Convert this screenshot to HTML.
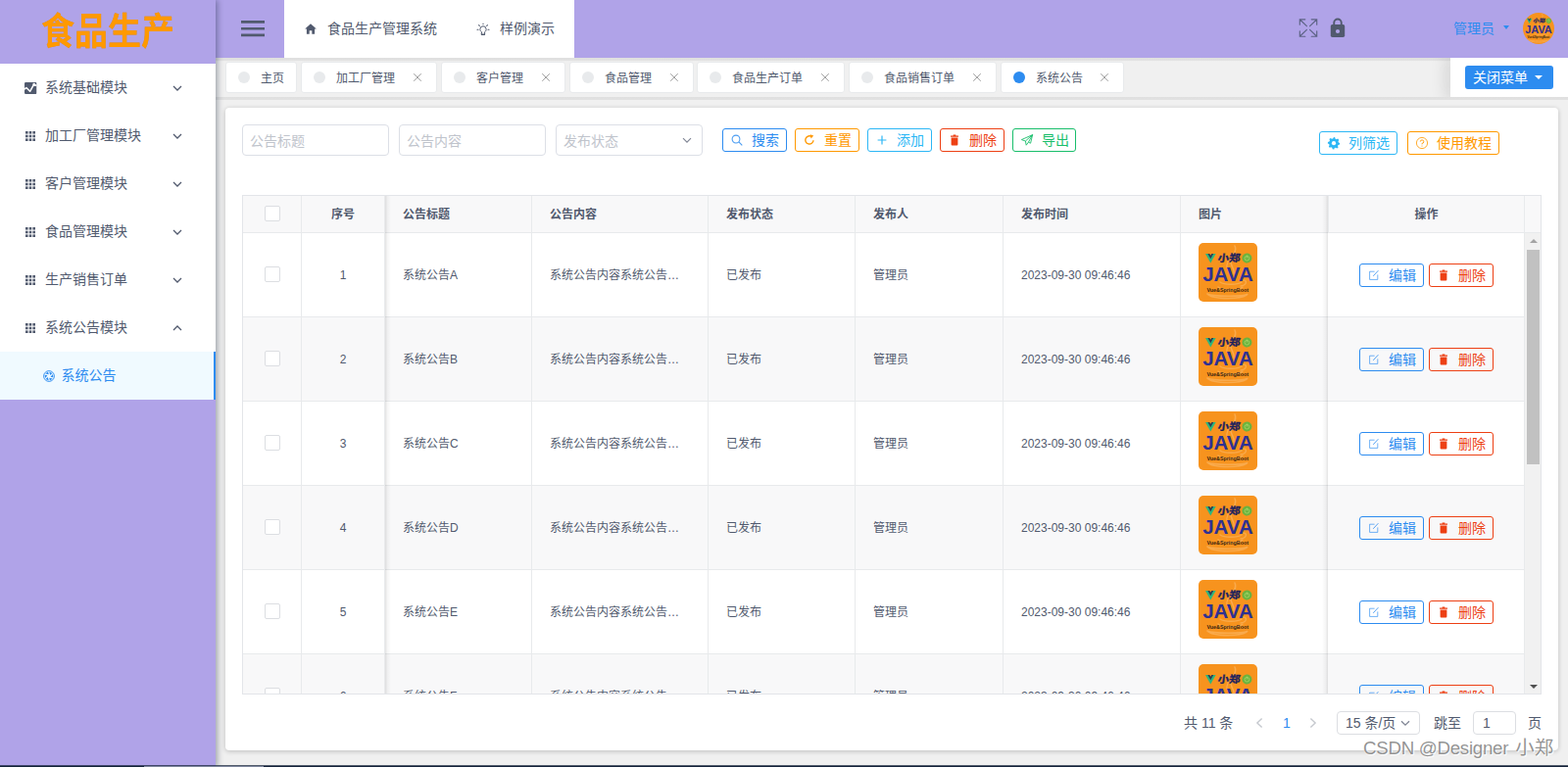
<!DOCTYPE html>
<html lang="zh-CN"><head><meta charset="utf-8"><title>食品生产管理系统</title>
<style>
*,*::before,*::after{box-sizing:border-box;margin:0;padding:0}
html,body{width:1600px;height:783px;overflow:hidden}
body{position:relative;background:#f0f0f0;font-family:"Liberation Sans","Noto Sans CJK SC",sans-serif;font-size:14px;color:#515a6e}
i{font-style:normal;display:block}
svg{display:block;overflow:visible}
#main,#header,#tabs,#card,#table,#thead,#pager{position:absolute;left:0;top:0;width:1600px;height:783px}
/* ---------- sider ---------- */
#sider{position:absolute;left:0;top:0;width:220px;height:783px;background:#b0a3e8;box-shadow:2px 0 6px rgba(0,21,41,.35)}
#logo{position:absolute;left:42.2px;top:10px;filter:drop-shadow(.6px .6px .3px rgba(190,100,0,.55))}
#menu{position:absolute;left:0;top:65px;width:220px;height:343px;background:#fff}
.mi{position:absolute;left:0;width:220px;height:49px;line-height:49px;font-size:14px;color:#515a6e;margin-top:-65px}
.mico{position:absolute;left:25px;top:19px}
.mico.an{left:24.8px;top:18.8px}
.mtxt{position:absolute;left:46px;top:0;white-space:nowrap}
.chev{position:absolute;left:176px;top:21px}
.mi.sub{background:#f0faff;color:#2d8cf0;border-right:2px solid #2d8cf0}
.sico{position:absolute;left:44px;top:19px}
.stxt{position:absolute;left:62.5px;top:0;white-space:nowrap}
/* ---------- header ---------- */
#header::before{content:"";position:absolute;left:220px;top:0;width:1380px;height:59px;background:#b0a3e8}
#hbtn{position:absolute;left:246px;top:20.5px}
#crumb{position:absolute;left:290px;top:0;width:296px;height:59px;background:#fff;line-height:58px;font-size:14px;color:#515a6e}
#crumb .ic-home{position:absolute;left:21px;top:24px}
#crumb .c1t{position:absolute;left:44px;top:0;white-space:nowrap}
#crumb .ic-bulb{position:absolute;left:196px;top:22px}
#crumb .c2t{position:absolute;left:220px;top:0;white-space:nowrap}
#ic-full{position:absolute;left:1325px;top:19px}
#ic-lock{position:absolute;left:1357px;top:18px}
#uname{position:absolute;left:1483px;top:0;line-height:58px;font-size:14px;color:#2d8cf0;white-space:nowrap}
#ucaret{position:absolute;left:1533.5px;top:26px;width:0;height:0;border:3.5px solid transparent;border-top:4px solid #2d8cf0;border-bottom:0}
#avatar{position:absolute;left:1554px;top:13px}
/* ---------- tabs ---------- */
#tabs::before{content:"";position:absolute;left:220px;top:59px;width:1380px;height:4px;background:linear-gradient(#dfdfdf 0,#e1e1e1 2.4px,#f0f0f0 3.6px)}
#tabs::after{content:"";position:absolute;left:220px;top:99px;width:1380px;height:4px;background:linear-gradient(#dfdfdf 0,#e1e1e1 2.6px,#f0f0f0 3.5px)}
.tab{position:absolute;top:63px;height:32px;background:#fff;border-radius:3px;line-height:30px;font-size:12px;color:#515a6e;border:1px solid #e8eaec}
.dot{position:absolute;left:12px;top:9px;width:12px;height:12px;border-radius:50%;background:#e8eaec}
.dot.on{background:#2d8cf0}
.tt{position:absolute;left:35px;top:1px;white-space:nowrap}
.tx{position:absolute;right:14px;top:10.4px}
#tcwrap{position:absolute;left:1400px;top:59px;width:200px;height:40px;overflow:hidden}
#tclose{position:absolute;left:80px;top:0;width:120px;height:40px;background:#fff;box-shadow:-3px 0 15px 3px rgba(0,0,0,.1)}
#tcbtn{position:absolute;left:15px;top:8px;width:90px;height:24px;border-radius:3px;background:#2d8cf0;color:#fff;font-size:14px;line-height:24px}
#tcbtn span{position:absolute;left:8px;top:0;white-space:nowrap}
#tcbtn i{position:absolute;left:71px;top:10px;width:0;height:0;border:4px solid transparent;border-top:4.5px solid #fff;border-bottom:0}
/* ---------- card ---------- */
#card::before{content:"";position:absolute;left:230px;top:110px;width:1360px;height:656px;background:#fff;border-radius:4px;box-shadow:0 1px 5px rgba(0,0,0,.22)}
.inp{position:absolute;top:127px;width:150px;height:32px;border:1px solid #dcdfe6;border-radius:4px;background:#fff;color:#c0c4cc;font-size:14px;line-height:32px;padding-left:7px;white-space:nowrap}
.selchev{position:absolute;left:128px;top:11.5px}
.gb{position:absolute;height:24px;border:1px solid;border-radius:3px;font-size:14px;line-height:22px;white-space:nowrap}
.gb .bi{position:absolute;left:7px;top:4px}
.gb span{position:absolute;left:29px;top:0}
.b-blue{color:#2d8cf0;border-color:#2d8cf0}
.b-orange{color:#ff9900;border-color:#ff9900}
.b-cyan{color:#2db7f5;border-color:#2db7f5}
.b-red{color:#ed4014;border-color:#ed4014}
.b-green{color:#19be6b;border-color:#19be6b}
/* ---------- table ---------- */
#table::before{content:"";position:absolute;left:247px;top:199px;width:1326px;height:510px;border:1px solid #e3e5e9;background:#fff}
#thead::before{content:"";position:absolute;left:248px;top:200px;width:1324px;height:37px;background:#f8f8f9}
#thead::after{content:"";position:absolute;left:248px;top:237px;width:1324px;height:1px;background:#e8eaec}
.th{position:absolute;top:200px;height:37px;line-height:39px;font-size:12px;font-weight:bold;color:#515a6e;white-space:nowrap;border-right:1px solid #e8eaec;padding-left:18px}
#tbody{position:absolute;left:0;top:0;width:1600px;height:708px;overflow:hidden}
.tr{position:absolute;left:0;width:1600px;height:86px}
.tr::before{content:"";position:absolute;left:248px;top:0;width:1308px;height:85px;background:#fff}
.tr.st::before{background:#f8f8f9}
.tr::after{content:"";position:absolute;left:248px;top:85px;width:1308px;height:1px;background:#e8eaec}
.td{position:absolute;top:0;height:85px;line-height:87px;font-size:12px;color:#515a6e;white-space:nowrap;border-right:1px solid #e8eaec;padding-left:18px}
.c1{left:248px;width:60px;padding-left:0}
.c2{left:308px;width:85px;padding-left:0;text-align:center}
.c3{left:393px;width:150px}
.c4{left:543px;width:180px}
.c5{left:723px;width:150px}
.c6{left:873px;width:151px}
.c7{left:1024px;width:181px}
.c8{left:1205px;width:150px;border-right:0}
.c9{left:1355px;width:201px;padding-left:0;text-align:center;border-left:1px solid #e8eaec}
.c10{left:1556px;width:16px;border-right:0}
.td.c9{left:0;width:1556px;border-left:0}

.cb{position:absolute;left:22px;top:10px;width:16px;height:16px;border:1px solid #dcdee2;border-radius:2px;background:#fff}
.td .cb{top:34px}
.pic{position:absolute;left:18px;top:10px}
#shl{position:absolute;left:393px;top:200px;width:6px;height:508px;background:linear-gradient(90deg,rgba(0,0,0,.11),rgba(0,0,0,.04) 38%,rgba(0,0,0,0))}
#shr{position:absolute;left:1349px;top:200px;width:6px;height:508px;background:linear-gradient(270deg,rgba(0,0,0,.11),rgba(0,0,0,.04) 38%,rgba(0,0,0,0))}
#sbar{position:absolute;left:1556px;top:238px;width:16px;height:470px;background:#f1f1f1}
#sbar .thumb{position:absolute;left:2px;top:17px;width:13px;height:219px;background:#c1c1c1}
#sbar .up{position:absolute;left:4.5px;top:6px;width:0;height:0;border:4px solid transparent;border-bottom:4.5px solid #a3a3a3;border-top:0}
#sbar .dn{position:absolute;left:4.5px;top:461px;width:0;height:0;border:4px solid transparent;border-top:4.5px solid #505050;border-bottom:0}
/* ---------- pager ---------- */
#pager{font-size:14px;color:#515a6e;line-height:24px}
#pager>*{position:absolute;top:726px;white-space:nowrap}
.p-total{left:1208px}
.p-prev{left:1281px;top:732px!important}
.p-cur{left:1309px;color:#2d8cf0}
.p-next{left:1336px;top:732px!important}
.p-size{left:1364px;width:85px;height:24px;border:1px solid #dcdee2;border-radius:4px;padding-left:8px;line-height:22px}
.p-size svg{position:absolute;left:64px;top:8px}
.p-goto{left:1463px}
.p-inp{left:1503px;width:44px;height:24px;border:1px solid #dcdee2;border-radius:4px;padding-left:9px;line-height:22px}
.p-page{left:1559px}
/* ---------- misc ---------- */
#wm{position:absolute;left:1391px;top:751px;font-size:18.7px;line-height:24px;color:rgba(105,105,105,.72);white-space:nowrap;text-shadow:1px 1px 1px #fff,0 0 2px #fff}
#wm span{letter-spacing:-.27px}
#wm b{font-weight:normal;margin-left:2px;font-size:19.4px}
#strip{position:absolute;left:0;top:781px;width:1600px;height:2px;background:linear-gradient(rgba(24,38,56,.5) 0,#14223a 55%)}
#strip i{position:absolute;left:147px;top:1px;width:122px;height:1px;background:#7f879e}

</style></head><body>
<svg width="0" height="0" style="position:absolute"><defs>
<symbol id="i-analytics" viewBox="0 0 12.5 12"><rect x="0" y="0" width="12.5" height="12" rx="1.2" fill="#515a6e"/><path d="M0 7.1 L1.9 5.5 L5.6 9.3 L9.6 2.1 L12.5 3.4" fill="none" stroke="#fff" stroke-width="1.5" stroke-linejoin="round"/><circle cx="9.7" cy="2" r="1.25" fill="#fff"/></symbol>
<symbol id="i-apps" viewBox="0 0 12 12"><g fill="#515a6e"><rect x="1" y="1" width="2.6" height="2.6"/><rect x="4.7" y="1" width="2.6" height="2.6"/><rect x="8.4" y="1" width="2.6" height="2.6"/><rect x="1" y="4.7" width="2.6" height="2.6"/><rect x="4.7" y="4.7" width="2.6" height="2.6"/><rect x="8.4" y="4.7" width="2.6" height="2.6"/><rect x="1" y="8.4" width="2.6" height="2.6"/><rect x="4.7" y="8.4" width="2.6" height="2.6"/><rect x="8.4" y="8.4" width="2.6" height="2.6"/></g></symbol>
<symbol id="i-aperture" viewBox="0 0 12 12"><circle cx="6" cy="6" r="5.4" fill="none" stroke="#2d8cf0" stroke-width=".9"/><path d="M6.20 1.55 L9.35 2.90 L7.30 5.00Z M9.95 3.95 L10.36 7.35 L7.52 6.63Z M9.75 8.40 L7.01 10.45 L6.22 7.63Z M5.80 10.45 L2.65 9.10 L4.70 7.00Z M2.05 8.05 L1.64 4.65 L4.48 5.37Z M2.25 3.60 L4.99 1.55 L5.78 4.37Z" fill="#2d8cf0"/></symbol>
<symbol id="i-home" viewBox="0 0 12 11"><path d="M6 0.2 L0.2 5.6 H1.9 V10.8 H4.7 V7.2 H7.3 V10.8 H10.1 V5.6 H11.8 Z" fill="#515a6e"/></symbol>
<symbol id="i-bulb" viewBox="0 0 14 14"><g fill="none" stroke="#515a6e" stroke-width="1" stroke-linecap="round"><path d="M5.4 10.7 C4.2 10 3.9 8.9 3.9 7.8 A3.1 3.1 0 0 1 10.1 7.8 C10.1 8.9 9.8 10 8.6 10.7 V13.2 H5.4 Z"/><path d="M5.6 13.3 H8.4" stroke-width="1.3"/><path d="M6.9 2.4 H7.1 M2.6 3.7 L3.3 4.4 M11.4 3.7 L10.7 4.4 M1 8.3 H2 M12 8.3 H13" stroke-width="1.1"/></g></symbol>
<symbol id="i-full" viewBox="0 0 20 20"><g fill="none" stroke="#5d6385" stroke-width="1.15" stroke-linecap="round"><path d="M1.3 6.2 V0.8 H6.8 M1.5 1 L8.4 7.7"/><path d="M13.2 0.8 H18.7 V6.2 M18.5 1 L11.6 7.7"/><path d="M1.3 12.8 V18.2 H6.8 M1.5 18 L8.4 11.3"/><path d="M13.2 18.2 H18.7 V12.8 M18.5 18 L11.6 11.3"/></g></symbol>
<symbol id="i-lock" viewBox="0 0 16 21"><path d="M4.25 8 V5.2 A3.75 3.75 0 0 1 11.75 5.2 V8" fill="none" stroke="#515a6e" stroke-width="1.9"/><rect x="0.8" y="7.1" width="14.4" height="12.9" rx="1.7" fill="#515a6e"/><circle cx="8" cy="14" r="2.1" fill="#b0a3e8"/></symbol>
<symbol id="i-search" viewBox="0 0 14 14"><g opacity=".85"><circle cx="6" cy="6" r="3.9" fill="none" stroke="currentColor" stroke-width="1.05"/><path d="M8.9 8.9 L12.3 12.3" stroke="currentColor" stroke-width="1.2" fill="none"/></g></symbol>
<symbol id="i-refresh" viewBox="0 0 14 14"><path d="M11 7.2 A4.1 4.1 0 1 1 9.3 3.6" fill="none" stroke="currentColor" stroke-width="1.4"/><path d="M7.6 1.2 L11.2 2.6 L8.6 5.4 Z" fill="currentColor"/></symbol>
<symbol id="i-plus" viewBox="0 0 14 14"><path d="M7 2.6 V11.4 M2.6 7 H11.4" stroke="currentColor" stroke-width="1.2" fill="none"/></symbol>
<symbol id="i-trash" viewBox="0 0 14 14"><path d="M3.6 4.5 H10.4 V11.5 A1.1 1.1 0 0 1 9.3 12.6 H4.7 A1.1 1.1 0 0 1 3.6 11.5 Z" fill="currentColor"/><path d="M3 3.1 H11 M5.6 2.1 H8.4" stroke="currentColor" stroke-width="1.2" fill="none"/></symbol>
<symbol id="i-plane" viewBox="0 0 14 14"><path d="M12.6 1.6 L1.4 6.6 L5.4 8 L6.2 12.2 L8.4 9.2 L10.6 10.2 Z M12.6 1.6 L5.4 8 M12.6 1.6 L8.4 9.2" fill="none" stroke="currentColor" stroke-width=".9" stroke-linejoin="round"/></symbol>
<symbol id="i-gear" viewBox="0 0 14 14"><path d="M7 1 L8.2 1.2 L8.6 2.7 L9.8 3.3 L11.2 2.6 L12.3 4 L11.5 5.3 L11.9 6.5 L13.2 7 L13 8.6 L11.6 9 L11 10.1 L11.6 11.5 L10.3 12.5 L9 11.7 L7.8 12.1 L7.3 13.4 L5.7 13.2 L5.3 11.8 L4.2 11.2 L2.8 11.8 L1.8 10.5 L2.6 9.2 L2.2 8 L0.8 7.5 L1 5.9 L2.4 5.5 L3 4.4 L2.4 3 L3.7 2 L5 2.8 L6.2 2.4 Z" fill="currentColor"/><circle cx="7" cy="7.2" r="2.1" fill="#fff"/></symbol>
<symbol id="i-help" viewBox="0 0 14 14"><circle cx="7" cy="7" r="5.6" fill="none" stroke="currentColor" stroke-width=".8"/><path d="M5.3 5.6 A1.75 1.75 0 1 1 7 7.4 V8.4" fill="none" stroke="currentColor" stroke-width=".9"/><circle cx="7" cy="10" r=".6" fill="currentColor"/></symbol>
<symbol id="i-edit" viewBox="0 0 14 14"><path d="M7.6 3.2 H2.6 V11.4 H10.8 V6.4" fill="none" stroke="currentColor" stroke-width=".9" opacity=".75"/><path d="M6.2 7.8 L11.4 2.2" stroke="currentColor" stroke-width="1" fill="none" opacity=".8"/></symbol>
<symbol id="jimg" viewBox="0 0 60 60"><rect width="60" height="60" rx="5" fill="#f7931e"/><g fill="none" stroke="#f9aa4c" stroke-linecap="round"><path d="M37 3 C40 9 34 13 33 18 C32 23 37 26 36 31" stroke-width="1.6"/><path d="M30 14 C32 18 28 21 29 25" stroke-width="1.2"/><path d="M22 40 C26 43 40 43 44 40 M44 38 C50 37 50 43 43 44" stroke-width="1.4"/><path d="M20 45 C25 49 41 49 45 45" stroke-width="1.4"/><path d="M9 52 C14 58 46 58 50 52 C48 55 14 55 9 52" stroke-width="1.6"/></g><path d="M7 11 H10.2 L12.3 14.6 L14.4 11 H17.6 L12.3 20.4 Z" fill="#2eb67d"/><path d="M9.4 11 H11.3 L12.3 12.8 L13.3 11 H15.2 L12.3 16.2 Z" fill="#2b3a55"/><text x="21.6" y="19.2" transform="skewX(-7)" font-family="Liberation Sans,Noto Sans CJK SC,sans-serif" font-size="10" font-weight="bold" fill="#1b1f5e" stroke="#1b1f5e" stroke-width=".35" textLength="23" lengthAdjust="spacingAndGlyphs">小郑</text><circle cx="49.4" cy="15.5" r="5" fill="#6cb33e"/><circle cx="49.4" cy="15.7" r="2.3" fill="none" stroke="#a6d86b" stroke-width=".8"/><path d="M49.4 12.6 V15.6" stroke="#a6d86b" stroke-width=".8"/><text x="4.2" y="38.5" font-family="Liberation Sans,sans-serif" font-size="19.4" font-weight="bold" fill="#2e3192" textLength="51.6" lengthAdjust="spacingAndGlyphs">JAVA</text><text x="8.5" y="49.6" font-family="Liberation Sans,sans-serif" font-size="5.8" font-weight="bold" fill="#3a2410" textLength="42.5" lengthAdjust="spacingAndGlyphs">Vue&amp;SpringBoot</text></symbol>
</defs></svg>

<div id="main">
<div id="header">
 <div id="hbtn"><svg width="24" height="17" viewBox="0 0 24 17"><path d="M0 1.4h24M0 8.2h24M0 14.9h24" stroke="#515a6e" stroke-width="2.6" fill="none"/></svg></div>
 <div id="crumb"><svg class="ic-home" width="12" height="11"><use href="#i-home"/></svg><span class="c1t">食品生产管理系统</span><svg class="ic-bulb" width="14" height="14"><use href="#i-bulb"/></svg><span class="c2t">样例演示</span></div>
 <svg id="ic-full" width="20" height="20"><use href="#i-full"/></svg>
 <svg id="ic-lock" width="16" height="21"><use href="#i-lock"/></svg>
 <span id="uname">管理员</span><i id="ucaret"></i>
 <svg id="avatar" width="32" height="32" viewBox="0 0 60 60"><defs><clipPath id="cc"><circle cx="30" cy="30" r="30"/></clipPath></defs><g clip-path="url(#cc)"><use href="#jimg"/></g></svg>
</div>
<div id="tabs">
<div class="tab" style="left:230px;width:73px"><i class="dot"></i><span class="tt">主页</span></div><div class="tab" style="left:307px;width:139px"><i class="dot"></i><span class="tt">加工厂管理</span><svg class="tx" width="10" height="10" viewBox="0 0 10 10"><path d="M1.2 1.2 L8.8 8.8 M8.8 1.2 L1.2 8.8" stroke="#a3a3a3" stroke-width="1" fill="none"/></svg></div><div class="tab" style="left:450px;width:127px"><i class="dot"></i><span class="tt">客户管理</span><svg class="tx" width="10" height="10" viewBox="0 0 10 10"><path d="M1.2 1.2 L8.8 8.8 M8.8 1.2 L1.2 8.8" stroke="#a3a3a3" stroke-width="1" fill="none"/></svg></div><div class="tab" style="left:581px;width:127px"><i class="dot"></i><span class="tt">食品管理</span><svg class="tx" width="10" height="10" viewBox="0 0 10 10"><path d="M1.2 1.2 L8.8 8.8 M8.8 1.2 L1.2 8.8" stroke="#a3a3a3" stroke-width="1" fill="none"/></svg></div><div class="tab" style="left:711px;width:151px"><i class="dot"></i><span class="tt">食品生产订单</span><svg class="tx" width="10" height="10" viewBox="0 0 10 10"><path d="M1.2 1.2 L8.8 8.8 M8.8 1.2 L1.2 8.8" stroke="#a3a3a3" stroke-width="1" fill="none"/></svg></div><div class="tab" style="left:866px;width:151px"><i class="dot"></i><span class="tt">食品销售订单</span><svg class="tx" width="10" height="10" viewBox="0 0 10 10"><path d="M1.2 1.2 L8.8 8.8 M8.8 1.2 L1.2 8.8" stroke="#a3a3a3" stroke-width="1" fill="none"/></svg></div><div class="tab" style="left:1021px;width:126px"><i class="dot on"></i><span class="tt">系统公告</span><svg class="tx" width="10" height="10" viewBox="0 0 10 10"><path d="M1.2 1.2 L8.8 8.8 M8.8 1.2 L1.2 8.8" stroke="#a3a3a3" stroke-width="1" fill="none"/></svg></div>
 <div id="tcwrap"><div id="tclose"><div id="tcbtn"><span>关闭菜单</span><i></i></div></div></div>
</div>
<div id="card">
 <div class="inp" style="left:247px">公告标题</div>
 <div class="inp" style="left:407px">公告内容</div>
 <div class="inp" style="left:567px">发布状态<svg class="selchev" width="10" height="7" viewBox="0 0 10 7"><path d="M1 1.2 L5 5.2 L9 1.2" fill="none" stroke="#808695" stroke-width="1.15"/></svg></div>
 <div class="gb b-blue" style="left:737px;top:131px;width:66px"><svg class="bi" width="14" height="14"><use href="#i-search"/></svg><span>搜索</span></div>
 <div class="gb b-orange" style="left:811px;top:131px;width:66px"><svg class="bi" width="14" height="14"><use href="#i-refresh"/></svg><span>重置</span></div>
 <div class="gb b-cyan" style="left:885px;top:131px;width:66px"><svg class="bi" width="14" height="14"><use href="#i-plus"/></svg><span>添加</span></div>
 <div class="gb b-red" style="left:959px;top:131px;width:66px"><svg class="bi" width="14" height="14"><use href="#i-trash"/></svg><span>删除</span></div>
 <div class="gb b-green" style="left:1033px;top:131px;width:65px"><svg class="bi" width="14" height="14"><use href="#i-plane"/></svg><span>导出</span></div>
 <div class="gb b-cyan" style="left:1346px;top:134px;width:80px"><svg class="bi" width="14" height="14"><use href="#i-gear"/></svg><span>列筛选</span></div>
 <div class="gb b-orange" style="left:1436px;top:134px;width:94px"><svg class="bi" width="14" height="14"><use href="#i-help"/></svg><span>使用教程</span></div>
 <div id="table">
  <div id="thead">
   <div class="th c1"><i class="cb"></i></div><div class="th c2">序号</div><div class="th c3">公告标题</div><div class="th c4">公告内容</div><div class="th c5">发布状态</div><div class="th c6">发布人</div><div class="th c7">发布时间</div><div class="th c8">图片</div><div class="th c9">操作</div><div class="th c10"></div>
  </div>
  <div id="tbody">
<div class="tr" style="top:238px">
<div class="td c1"><i class="cb"></i></div>
<div class="td c2">1</div>
<div class="td c3">系统公告A</div>
<div class="td c4">系统公告内容系统公告…</div>
<div class="td c5">已发布</div>
<div class="td c6">管理员</div>
<div class="td c7">2023-09-30 09:46:46</div>
<div class="td c8"><svg class="pic" width="60" height="60" viewBox="0 0 60 60"><use href="#jimg"/></svg></div>
<div class="td c9"><div class="gb b-blue" style="left:1387px;top:31px;width:66px"><svg class="bi" width="14" height="14"><use href="#i-edit"/></svg><span>编辑</span></div><div class="gb b-red" style="left:1458px;top:31px;width:66px"><svg class="bi" width="14" height="14"><use href="#i-trash"/></svg><span>删除</span></div></div>
</div><div class="tr st" style="top:324px">
<div class="td c1"><i class="cb"></i></div>
<div class="td c2">2</div>
<div class="td c3">系统公告B</div>
<div class="td c4">系统公告内容系统公告…</div>
<div class="td c5">已发布</div>
<div class="td c6">管理员</div>
<div class="td c7">2023-09-30 09:46:46</div>
<div class="td c8"><svg class="pic" width="60" height="60" viewBox="0 0 60 60"><use href="#jimg"/></svg></div>
<div class="td c9"><div class="gb b-blue" style="left:1387px;top:31px;width:66px"><svg class="bi" width="14" height="14"><use href="#i-edit"/></svg><span>编辑</span></div><div class="gb b-red" style="left:1458px;top:31px;width:66px"><svg class="bi" width="14" height="14"><use href="#i-trash"/></svg><span>删除</span></div></div>
</div><div class="tr" style="top:410px">
<div class="td c1"><i class="cb"></i></div>
<div class="td c2">3</div>
<div class="td c3">系统公告C</div>
<div class="td c4">系统公告内容系统公告…</div>
<div class="td c5">已发布</div>
<div class="td c6">管理员</div>
<div class="td c7">2023-09-30 09:46:46</div>
<div class="td c8"><svg class="pic" width="60" height="60" viewBox="0 0 60 60"><use href="#jimg"/></svg></div>
<div class="td c9"><div class="gb b-blue" style="left:1387px;top:31px;width:66px"><svg class="bi" width="14" height="14"><use href="#i-edit"/></svg><span>编辑</span></div><div class="gb b-red" style="left:1458px;top:31px;width:66px"><svg class="bi" width="14" height="14"><use href="#i-trash"/></svg><span>删除</span></div></div>
</div><div class="tr st" style="top:496px">
<div class="td c1"><i class="cb"></i></div>
<div class="td c2">4</div>
<div class="td c3">系统公告D</div>
<div class="td c4">系统公告内容系统公告…</div>
<div class="td c5">已发布</div>
<div class="td c6">管理员</div>
<div class="td c7">2023-09-30 09:46:46</div>
<div class="td c8"><svg class="pic" width="60" height="60" viewBox="0 0 60 60"><use href="#jimg"/></svg></div>
<div class="td c9"><div class="gb b-blue" style="left:1387px;top:31px;width:66px"><svg class="bi" width="14" height="14"><use href="#i-edit"/></svg><span>编辑</span></div><div class="gb b-red" style="left:1458px;top:31px;width:66px"><svg class="bi" width="14" height="14"><use href="#i-trash"/></svg><span>删除</span></div></div>
</div><div class="tr" style="top:582px">
<div class="td c1"><i class="cb"></i></div>
<div class="td c2">5</div>
<div class="td c3">系统公告E</div>
<div class="td c4">系统公告内容系统公告…</div>
<div class="td c5">已发布</div>
<div class="td c6">管理员</div>
<div class="td c7">2023-09-30 09:46:46</div>
<div class="td c8"><svg class="pic" width="60" height="60" viewBox="0 0 60 60"><use href="#jimg"/></svg></div>
<div class="td c9"><div class="gb b-blue" style="left:1387px;top:31px;width:66px"><svg class="bi" width="14" height="14"><use href="#i-edit"/></svg><span>编辑</span></div><div class="gb b-red" style="left:1458px;top:31px;width:66px"><svg class="bi" width="14" height="14"><use href="#i-trash"/></svg><span>删除</span></div></div>
</div><div class="tr st" style="top:668px">
<div class="td c1"><i class="cb"></i></div>
<div class="td c2">6</div>
<div class="td c3">系统公告F</div>
<div class="td c4">系统公告内容系统公告…</div>
<div class="td c5">已发布</div>
<div class="td c6">管理员</div>
<div class="td c7">2023-09-30 09:46:46</div>
<div class="td c8"><svg class="pic" width="60" height="60" viewBox="0 0 60 60"><use href="#jimg"/></svg></div>
<div class="td c9"><div class="gb b-blue" style="left:1387px;top:31px;width:66px"><svg class="bi" width="14" height="14"><use href="#i-edit"/></svg><span>编辑</span></div><div class="gb b-red" style="left:1458px;top:31px;width:66px"><svg class="bi" width="14" height="14"><use href="#i-trash"/></svg><span>删除</span></div></div>
</div>
  </div>
  <div id="shl"></div><div id="shr"></div>
  <div id="sbar"><i class="up"></i><i class="thumb"></i><i class="dn"></i></div>
 </div>
 <div id="pager"><span class="p-total">共 11 条</span><svg class="p-prev" width="8" height="12" viewBox="0 0 8 12"><path d="M6.6 1.6 L1.9 6 L6.6 10.4" fill="none" stroke="#c5c8ce" stroke-width="1.4"/></svg><span class="p-cur">1</span><svg class="p-next" width="8" height="12" viewBox="0 0 8 12"><path d="M1.4 1.6 L6.1 6 L1.4 10.4" fill="none" stroke="#c5c8ce" stroke-width="1.4"/></svg><div class="p-size">15 条/页<svg width="10" height="7" viewBox="0 0 10 7"><path d="M1 1.2 L5 5.2 L9 1.2" fill="none" stroke="#808695" stroke-width="1.3"/></svg></div><span class="p-goto">跳至</span><div class="p-inp">1</div><span class="p-page">页</span></div>
</div>
</div>
<div id="sider">
 <svg id="logo" width="136" height="38.5" viewBox="0 0 136 38.5" aria-label="食品生产"><text x="0" y="31" transform="scale(1,1.12)" font-family="Liberation Sans,Noto Sans CJK SC,sans-serif" font-size="34" font-weight="bold" fill="#ff9900" textLength="136" lengthAdjust="spacingAndGlyphs">食品生产</text></svg>
 <div id="menu">
 <div class="mi" style="top:65px"><svg class="mico an" width="12.5" height="12"><use href="#i-analytics"/></svg><span class="mtxt">系统基础模块</span><svg class="chev" width="10" height="8" viewBox="0 0 10 8"><path d="M1 2 L5 6 L9 2" fill="none" stroke="#515a6e" stroke-width="1.3"/></svg></div>
 <div class="mi" style="top:114px"><svg class="mico" width="12" height="12"><use href="#i-apps"/></svg><span class="mtxt">加工厂管理模块</span><svg class="chev" width="10" height="8" viewBox="0 0 10 8"><path d="M1 2 L5 6 L9 2" fill="none" stroke="#515a6e" stroke-width="1.3"/></svg></div>
 <div class="mi" style="top:163px"><svg class="mico" width="12" height="12"><use href="#i-apps"/></svg><span class="mtxt">客户管理模块</span><svg class="chev" width="10" height="8" viewBox="0 0 10 8"><path d="M1 2 L5 6 L9 2" fill="none" stroke="#515a6e" stroke-width="1.3"/></svg></div>
 <div class="mi" style="top:212px"><svg class="mico" width="12" height="12"><use href="#i-apps"/></svg><span class="mtxt">食品管理模块</span><svg class="chev" width="10" height="8" viewBox="0 0 10 8"><path d="M1 2 L5 6 L9 2" fill="none" stroke="#515a6e" stroke-width="1.3"/></svg></div>
 <div class="mi" style="top:261px"><svg class="mico" width="12" height="12"><use href="#i-apps"/></svg><span class="mtxt">生产销售订单</span><svg class="chev" width="10" height="8" viewBox="0 0 10 8"><path d="M1 2 L5 6 L9 2" fill="none" stroke="#515a6e" stroke-width="1.3"/></svg></div>
 <div class="mi" style="top:310px"><svg class="mico" width="12" height="12"><use href="#i-apps"/></svg><span class="mtxt">系统公告模块</span><svg class="chev" width="10" height="8" viewBox="0 0 10 8"><path d="M1 6 L5 2 L9 6" fill="none" stroke="#515a6e" stroke-width="1.3"/></svg></div>
 <div class="mi sub" style="top:359px"><svg class="sico" width="12" height="12"><use href="#i-aperture"/></svg><span class="stxt">系统公告</span></div>
 </div>
</div>
<div id="wm"><span>CSDN @Designer</span> <b>小郑</b></div>
<div id="strip"><i></i></div>
</body></html>
